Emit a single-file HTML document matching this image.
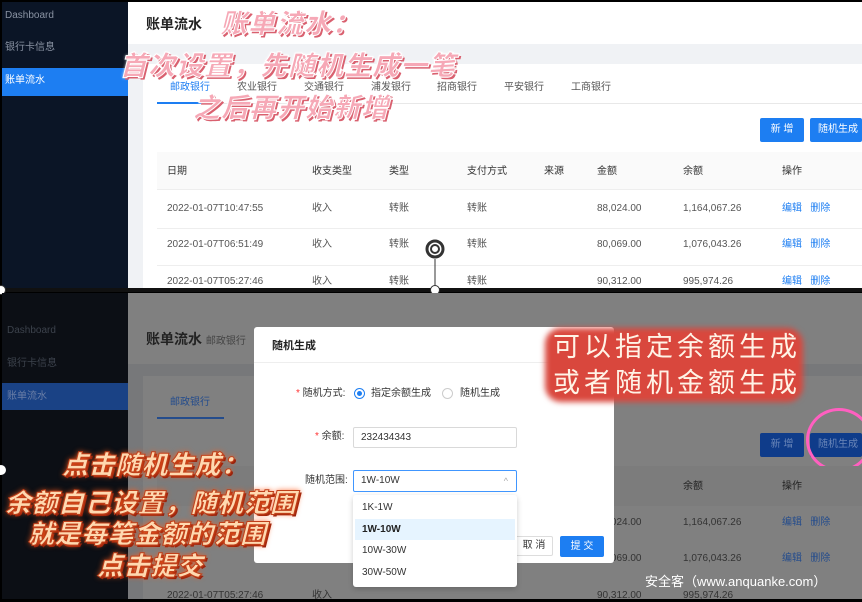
<!DOCTYPE html>
<html><head><meta charset="utf-8"><style>
*{margin:0;padding:0;box-sizing:border-box}
body{width:862px;height:601px;overflow:hidden;background:#000;font-family:"Liberation Sans","Noto Sans CJK SC",sans-serif;position:relative}
.a{position:absolute}
.t{font-size:10px;line-height:12px;color:#555;white-space:nowrap}
.cap{position:absolute;white-space:nowrap;font-weight:900;font-style:italic;font-family:"Noto Sans CJK SC",sans-serif;line-height:1.1}
.pink{color:#f6a8b6;-webkit-text-stroke:1px #fff;text-shadow:2px 2px 0 #d9606f,0 0 3px #fff;font-size:27px;letter-spacing:1px}
.orange{color:#ffd9b0;-webkit-text-stroke:1px #c0401a;text-shadow:0 0 6px #ff5a1a,2px 2px 0 #8a1a0a;font-size:26px;letter-spacing:0.5px}
</style></head><body>
<!-- top half -->
<div class="a" style="left:2px;top:2px;width:126px;height:287px;background:#0b1526"></div>
<div class="a t" style="left:5px;top:10px;color:#8a93a3">Dashboard</div>
<div class="a t" style="left:5px;top:42px;color:#8a93a3">银行卡信息</div>
<div class="a" style="left:2px;top:68px;width:126px;height:28px;background:#1d7ef2"></div>
<div class="a t" style="left:5px;top:75px;color:#fff">账单流水</div>
<div class="a" style="left:128px;top:2px;width:734px;height:287px;background:#f0f2f5"></div>
<div class="a" style="left:128px;top:2px;width:734px;height:42px;background:#fff"></div>
<div class="a" style="left:146px;top:15px;font-size:14px;line-height:18px;color:#222;font-weight:bold">账单流水</div>
<div class="a" style="left:143px;top:64px;width:719px;height:225px;background:#fff"></div>
<div class="a t" style="left:170px;top:82px;color:#1d7ef2">邮政银行</div>
<div class="a t" style="left:237px;top:82px">农业银行</div>
<div class="a t" style="left:304px;top:82px">交通银行</div>
<div class="a t" style="left:371px;top:82px">浦发银行</div>
<div class="a t" style="left:437px;top:82px">招商银行</div>
<div class="a t" style="left:504px;top:82px">平安银行</div>
<div class="a t" style="left:571px;top:82px">工商银行</div>
<div class="a" style="left:157px;top:103px;width:705px;height:1px;background:#e8e8e8"></div>
<div class="a" style="left:157px;top:102px;width:48px;height:2px;background:#1d7ef2"></div>
<div class="a" style="left:760px;top:118px;width:44px;height:24px;background:#1d7ef2;border-radius:2px;color:#fff;font-size:10px;text-align:center;line-height:24px">新 增</div>
<div class="a" style="left:810px;top:118px;width:52px;height:24px;background:#1d7ef2;border-radius:2px;color:#fff;font-size:10px;line-height:24px;padding-left:8px;overflow:hidden">随机生成</div>
<div class="a" style="left:157px;top:152px;width:705px;height:38px;background:#fafafa;border-bottom:1px solid #eee"></div>
<div class="a t" style="left:167px;top:166px;color:#333">日期</div>
<div class="a t" style="left:312px;top:166px;color:#333">收支类型</div>
<div class="a t" style="left:389px;top:166px;color:#333">类型</div>
<div class="a t" style="left:467px;top:166px;color:#333">支付方式</div>
<div class="a t" style="left:544px;top:166px;color:#333">来源</div>
<div class="a t" style="left:597px;top:166px;color:#333">金额</div>
<div class="a t" style="left:683px;top:166px;color:#333">余额</div>
<div class="a t" style="left:782px;top:166px;color:#333">操作</div>
<div class="a" style="left:157px;top:228px;width:705px;height:1px;background:#eee"></div>
<div class="a" style="left:157px;top:265px;width:705px;height:1px;background:#eee"></div>
<div class="a t" style="left:167px;top:203px">2022-01-07T10:47:55</div><div class="a t" style="left:312px;top:203px">收入</div><div class="a t" style="left:389px;top:203px">转账</div><div class="a t" style="left:467px;top:203px">转账</div><div class="a t" style="left:597px;top:203px">88,024.00</div><div class="a t" style="left:683px;top:203px">1,164,067.26</div><div class="a t" style="left:782px;top:203px;color:#1d7ef2">编辑 &nbsp; 删除</div>
<div class="a t" style="left:167px;top:239px">2022-01-07T06:51:49</div><div class="a t" style="left:312px;top:239px">收入</div><div class="a t" style="left:389px;top:239px">转账</div><div class="a t" style="left:467px;top:239px">转账</div><div class="a t" style="left:597px;top:239px">80,069.00</div><div class="a t" style="left:683px;top:239px">1,076,043.26</div><div class="a t" style="left:782px;top:239px;color:#1d7ef2">编辑 &nbsp; 删除</div>
<div class="a t" style="left:167px;top:276px">2022-01-07T05:27:46</div><div class="a t" style="left:312px;top:276px">收入</div><div class="a t" style="left:389px;top:276px">转账</div><div class="a t" style="left:467px;top:276px">转账</div><div class="a t" style="left:597px;top:276px">90,312.00</div><div class="a t" style="left:683px;top:276px">995,974.26</div><div class="a t" style="left:782px;top:276px;color:#1d7ef2">编辑 &nbsp; 删除</div>
<svg class="a" style="left:421px;top:236px" width="28" height="58"><circle cx="14" cy="13" r="8" fill="none" stroke="#333" stroke-width="3"/><circle cx="14" cy="13" r="4" fill="none" stroke="#333" stroke-width="2"/><line x1="14" y1="23" x2="14" y2="54" stroke="#333"/></svg>
<div class="a" style="left:0;top:288px;width:862px;height:4px;background:#111"></div>
<div class="a" style="left:-4px;top:285px;width:10px;height:10px;border-radius:50%;background:#fff;border:1px solid #333"></div>
<div class="a" style="left:430px;top:285px;width:10px;height:10px;border-radius:50%;background:#fff;border:1px solid #333"></div>
<!-- bottom half (dimmed) -->
<div class="a" style="left:2px;top:293px;width:126px;height:306px;background:#0c0f15"></div>
<div class="a t" style="left:7px;top:325px;color:#3c424c">Dashboard</div>
<div class="a t" style="left:7px;top:358px;color:#3c424c">银行卡信息</div>
<div class="a" style="left:2px;top:383px;width:126px;height:27px;background:#1a4285"></div>
<div class="a t" style="left:7px;top:391px;color:#6a7ea6">账单流水</div>
<div class="a" style="left:128px;top:293px;width:734px;height:306px;background:#77787a"></div>
<div class="a" style="left:128px;top:293px;width:734px;height:71px;background:#808080"></div>
<div class="a" style="left:146px;top:330px;font-size:14px;line-height:18px;color:#222;font-weight:bold">账单流水 <span style="font-size:10px;color:#444;font-weight:normal">邮政银行</span></div>
<div class="a" style="left:143px;top:376px;width:719px;height:223px;background:#808080"></div>
<div class="a t" style="left:170px;top:397px;color:#244c8c">邮政银行</div>
<div class="a" style="left:157px;top:417px;width:67px;height:2px;background:#244c8c"></div>
<div class="a" style="left:760px;top:433px;width:44px;height:24px;background:#0f3c8a;border-radius:2px;color:#6a86b8;font-size:10px;text-align:center;line-height:24px">新 增</div>
<div class="a" style="left:810px;top:433px;width:52px;height:24px;background:#0f3c8a;border-radius:2px;color:#6a86b8;font-size:10px;line-height:24px;padding-left:8px;overflow:hidden">随机生成</div>
<div class="a" style="left:806px;top:408px;width:66px;height:64px;border:3px solid #ff5fc0;border-radius:50%"></div>
<div class="a" style="left:157px;top:466px;width:705px;height:40px;background:#7c7c7c"></div>
<div class="a t" style="left:683px;top:481px;color:#222">余额</div><div class="a t" style="left:782px;top:481px;color:#222">操作</div>
<div class="a t" style="left:597px;top:517px;color:#333">88,024.00</div><div class="a t" style="left:683px;top:517px;color:#333">1,164,067.26</div><div class="a t" style="left:782px;top:517px;color:#244c8c">编辑 &nbsp; 删除</div>
<div class="a t" style="left:597px;top:553px;color:#333">80,069.00</div><div class="a t" style="left:683px;top:553px;color:#333">1,076,043.26</div><div class="a t" style="left:782px;top:553px;color:#244c8c">编辑 &nbsp; 删除</div>
<div class="a t" style="left:167px;top:590px;color:#333">2022-01-07T05:27:46</div><div class="a t" style="left:312px;top:590px;color:#333">收入</div><div class="a t" style="left:597px;top:590px;color:#333">90,312.00</div><div class="a t" style="left:683px;top:590px;color:#333">995,974.26</div>
<!-- modal -->
<div class="a" style="left:254px;top:327px;width:360px;height:236px;background:#fff;border-radius:3px"></div>
<div class="a" style="left:272px;top:339px;font-size:11px;line-height:14px;color:#222;font-weight:bold">随机生成</div>
<div class="a" style="left:254px;top:362px;width:360px;height:1px;background:#eee"></div>
<div class="a t" style="left:296px;top:388px;color:#333"><span style="color:#f33">*</span> 随机方式:</div>
<div class="a" style="left:354px;top:388px;width:11px;height:11px;border-radius:50%;border:1px solid #1d7ef2"></div>
<div class="a" style="left:357px;top:391px;width:5px;height:5px;border-radius:50%;background:#1d7ef2"></div>
<div class="a t" style="left:371px;top:388px;color:#333">指定余额生成</div>
<div class="a" style="left:442px;top:388px;width:11px;height:11px;border-radius:50%;border:1px solid #ccc"></div>
<div class="a t" style="left:460px;top:388px;color:#333">随机生成</div>
<div class="a t" style="left:315px;top:431px;color:#333"><span style="color:#f33">*</span> 余额:</div>
<div class="a" style="left:353px;top:427px;width:164px;height:21px;border:1px solid #d9d9d9;border-radius:2px;font-size:10px;line-height:12px;color:#333;padding:4px 7px">232434343</div>
<div class="a t" style="left:305px;top:475px;color:#333">随机范围:</div>
<div class="a" style="left:353px;top:470px;width:164px;height:22px;border:1px solid #4096ff;border-radius:2px;font-size:10px;line-height:12px;color:#333;padding:4px 7px">1W-10W<span style="position:absolute;right:8px;top:4px;color:#aaa;font-size:9px">^</span></div>
<div class="a" style="left:515px;top:536px;width:38px;height:20px;border:1px solid #ddd;border-radius:2px;font-size:10px;color:#333;text-align:center;line-height:18px">取 消</div>
<div class="a" style="left:560px;top:536px;width:44px;height:21px;background:#1d7ef2;border-radius:2px;font-size:10px;color:#fff;text-align:center;line-height:21px">提 交</div>
<div class="a" style="left:353px;top:495px;width:164px;height:92px;background:#fff;border-radius:3px;box-shadow:0 2px 6px rgba(0,0,0,.2)"></div>
<div class="a t" style="left:362px;top:502px;color:#333">1K-1W</div>
<div class="a" style="left:355px;top:519px;width:160px;height:21px;background:#e6f4ff"></div>
<div class="a t" style="left:362px;top:524px;color:#222;font-weight:bold">1W-10W</div>
<div class="a t" style="left:362px;top:545px;color:#333">10W-30W</div>
<div class="a t" style="left:362px;top:567px;color:#333">30W-50W</div>
<div class="a" style="left:-4px;top:465px;width:10px;height:10px;border-radius:50%;background:#fff"></div>
<!-- captions -->
<div class="cap pink" style="left:220px;top:7px">账单流水：</div>
<div class="cap pink" style="left:120px;top:49px">首次设置，先随机生成一笔</div>
<div class="cap pink" style="left:193px;top:91px">之后再开始新增</div>
<div class="a" style="left:545px;top:328px;width:258px;height:74px;background:#d9473d;border-radius:16px;filter:blur(3px)"></div>
<div class="a" style="left:553px;top:329px;font-size:27px;line-height:32px;color:#fff3e6;letter-spacing:4px;white-space:nowrap;font-family:'Noto Sans CJK SC',sans-serif">可以指定余额生成</div>
<div class="a" style="left:553px;top:365px;font-size:27px;line-height:32px;color:#fff3e6;letter-spacing:4px;white-space:nowrap;font-family:'Noto Sans CJK SC',sans-serif">或者随机金额生成</div>
<div class="cap orange" style="left:62px;top:450px">点击随机生成：</div>
<div class="cap orange" style="left:5px;top:488px">余额自己设置，随机范围</div>
<div class="cap orange" style="left:28px;top:519px">就是每笔金额的范围</div>
<div class="cap orange" style="left:97px;top:551px">点击提交</div>
<div class="a" style="left:645px;top:574px;font-size:13px;line-height:16px;color:#fff;white-space:nowrap">安全客（www.anquanke.com）</div>
</body></html>
